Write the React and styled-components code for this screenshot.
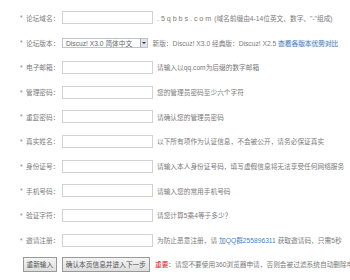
import React from "react";
import styled, { createGlobalStyle } from "styled-components";

const Global = createGlobalStyle`
  html, body { margin: 0; padding: 0; background: #fff; }
  body {
    width: 350px; height: 280px; overflow: hidden;
    font-family: "Liberation Sans", "Noto Sans CJK SC", sans-serif;
    font-size: 6.7px; color: #7a7a7a;
  }
`;

const Form = styled.div`
  padding: 5.6px 0 0 20px;
  display: flex;
  flex-direction: column;
  white-space: nowrap;
`;

const Row = styled.div`
  height: 24.7px;
  display: flex;
  align-items: center;
`;

const Label = styled.div`
  width: 42px;
  display: flex;
  align-items: center;
  color: #7a7a7a;
`;

const Star = styled.span`
  color: #888;
  width: 6px;
`;

const Field = styled.div`
  width: 91px;
  height: 13px;
  box-sizing: border-box;
  border: 1px solid #d2d2d2;
  background: #fff;
  flex: none;
`;

const Select = styled.div`
  width: 85.5px;
  height: 10px;
  box-sizing: border-box;
  border: 1px solid #b8c4d4;
  display: flex;
  align-items: center;
  justify-content: space-between;
  padding-left: 3px;
  color: #666;
  flex: none;
  margin-right: 5px;
`;

const Arrow = styled.div`
  width: 6px;
  height: 8px;
  background: #e4e4e4;
  border-left: 1px solid #aaa;
  display: flex;
  align-items: center;
  justify-content: center;
  &::after {
    content: "";
    border-left: 2px solid transparent;
    border-right: 2px solid transparent;
    border-top: 2px solid #333;
  }
`;

const Hint = styled.div`
  margin-left: 4px;
  color: #7a7a7a;
`;

const Domain = styled.span`
  letter-spacing: 1.9px;
  font-size: 7.2px;
  margin-right: 1px;
`;

const Link = styled.span`
  color: #4a7fb8;
  background: ${(p) => (p.$hl ? "#eaf1f9" : "transparent")};
`;

const Buttons = styled.div`
  margin-top: 4.5px;
  margin-left: 3px;
  height: 15px;
  display: flex;
  align-items: center;
`;

const Btn = styled.div`
  height: 15px;
  box-sizing: border-box;
  padding: 0 ${(p) => p.$pad}px;
  border: 1px solid #999;
  background: linear-gradient(#f4f4f4, #dedede);
  display: flex;
  align-items: center;
  color: #555;
  margin-right: 5px;
`;

const Red = styled.span`
  color: #d22;
`;

const rows = [
  ["电子邮箱", "请输入以qq.com为后缀的数字邮箱"],
  ["管理密码", "您的管理员密码至少六个字符"],
  ["重复密码", "请确认您的管理员密码"],
  ["真实姓名", "以下所有项作为认证信息，不会被公开，请务必保证真实"],
  ["身份证号", "请输入本人身份证号码，填写虚假信息将无法享受任何网络服务"],
  ["手机号码", "请输入您的常用手机号码"],
  ["验证字符", "请您计算5乘4等于多少？"],
];

export default function App() {
  return (
    <>
      <Global />
      <Form>
        <Row>
          <Label><Star>*</Star>论坛域名：</Label>
          <Field />
          <Hint><Domain>.5qbbs.com</Domain>(域名前缀由4-14位英文、数字、"-"组成)</Hint>
        </Row>
        <Row>
          <Label><Star>*</Star>论坛版本：</Label>
          <Select>Discuz! X3.0 简体中文<Arrow /></Select>
          <span>新版：Discuz! X3.0 经典版：Discuz! X2.5 <Link $hl>查看各版本优势对比</Link></span>
        </Row>
        {rows.map(([l, h]) => (
          <Row key={l}>
            <Label><Star>*</Star>{l}：</Label>
            <Field />
            <Hint>{h}</Hint>
          </Row>
        ))}
        <Row>
          <Label><Star>*</Star>邀请注册：</Label>
          <Field />
          <Hint>为防止恶意注册，请 <Link>加QQ群255896311</Link> 获取邀请码，只需5秒</Hint>
        </Row>
        <Buttons>
          <Btn $pad={2.5}>重新输入</Btn>
          <Btn $pad={3}>确认本页信息并进入下一步</Btn>
          <span><Red>重要：</Red>请您不要使用360浏览器申请，否则会被过滤系统自动删除申请</span>
        </Buttons>
      </Form>
    </>
  );
}
